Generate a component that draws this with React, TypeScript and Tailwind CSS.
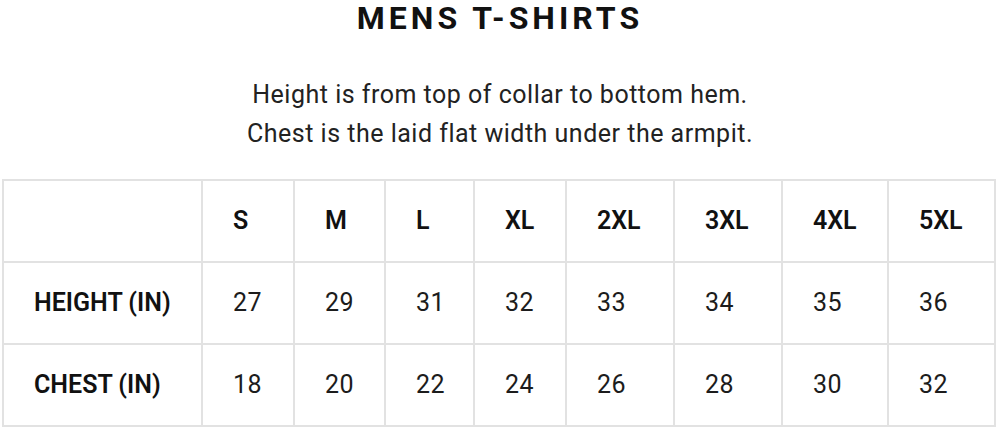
import React from "react";

const sizes = ["S", "M", "L", "XL", "2XL", "3XL", "4XL", "5XL"];

const rows = [
  { label: "HEIGHT (IN)", values: [27, 29, 31, 32, 33, 34, 35, 36] },
  { label: "CHEST (IN)", values: [18, 20, 22, 24, 26, 28, 30, 32] },
];

const cell = "border-2 border-[#e2e2e2] pl-[30px] text-left align-middle";

export default function App() {
  return (
    <div
      className="w-[1000px] h-[432px] bg-white text-[#1c1c1c] overflow-hidden"
      style={{ fontFamily: "Roboto, 'Noto Sans', sans-serif" }}
    >
      <h1 className="pt-[1px] text-center text-[32px] leading-[34px] font-bold tracking-[4px] text-[#111]">
        MENS T-SHIRTS
      </h1>

      <div className="mt-[40px] text-center text-[25px] leading-[39px] tracking-[0.5px] text-[#222]">
        <p>Height is from top of collar to bottom hem.</p>
        <p>Chest is the laid flat width under the armpit.</p>
      </div>

      <table className="mt-[26px] ml-[2px] w-[994px] table-fixed border-collapse text-[25px]">
        <colgroup>
          <col className="w-[199px]" />
          <col className="w-[92px]" />
          <col className="w-[91px]" />
          <col className="w-[89px]" />
          <col className="w-[92px]" />
          <col className="w-[108px]" />
          <col className="w-[108px]" />
          <col className="w-[106px]" />
          <col className="w-[107px]" />
        </colgroup>
        <thead>
          <tr className="h-[82px]">
            <th className={cell}></th>
            {sizes.map((s) => (
              <th key={s} className={`${cell} font-semibold text-[#111]`}>
                {s}
              </th>
            ))}
          </tr>
        </thead>
        <tbody>
          {rows.map((r) => (
            <tr key={r.label} className="h-[82px]">
              <td className={`${cell} font-semibold text-[#111]`}>{r.label}</td>
              {r.values.map((v, i) => (
                <td key={i} className={`${cell} font-normal tracking-[0.5px]`}>
                  {v}
                </td>
              ))}
            </tr>
          ))}
        </tbody>
      </table>
    </div>
  );
}
